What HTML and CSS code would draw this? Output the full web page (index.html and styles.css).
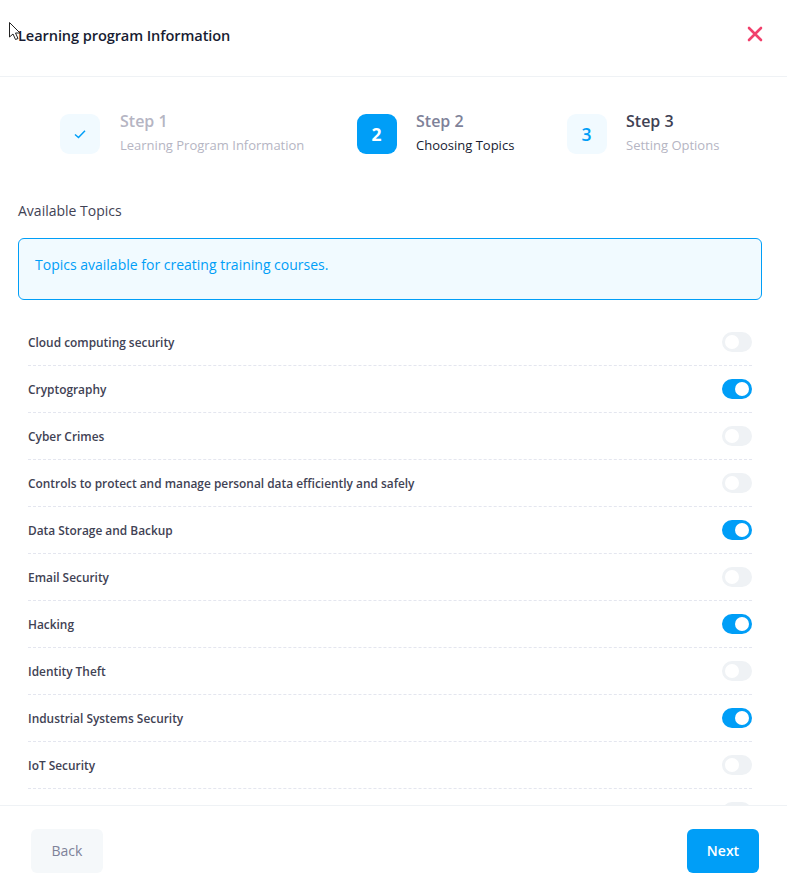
FILE: index.html
```html
<!DOCTYPE html>
<html lang="en">
<head>
<meta charset="utf-8">
<title>Learning program Information</title>
<link rel="stylesheet" href="styles.css">
</head>
<body>
<div class="modal">
  <header class="head">
    <h1 class="title">Learning program Information</h1>
    <svg class="close" width="16" height="16" viewBox="0 0 16 16"><path d="M2 2 L14 14 M14 2 L2 14" stroke="#f1416c" stroke-width="2.6" stroke-linecap="round" fill="none"/></svg>
  </header>
  <main class="body">
    <nav class="steps">
      <div class="step s1">
        <div class="badge"><svg width="14" height="14" viewBox="0 0 14 14"><path d="M2 7.5 L5.5 10.5 L12 3.8" stroke="#009ef7" stroke-width="1.5" fill="none"/></svg></div>
        <div class="step-text"><div class="step-name done">Step 1</div><div class="step-desc">Learning Program Information</div></div>
      </div>
      <div class="step s2">
        <div class="badge active">2</div>
        <div class="step-text"><div class="step-name mid">Step 2</div><div class="step-desc dark">Choosing Topics</div></div>
      </div>
      <div class="step s3">
        <div class="badge">3</div>
        <div class="step-text"><div class="step-name">Step 3</div><div class="step-desc">Setting Options</div></div>
      </div>
    </nav>
    <div class="label">Available Topics</div>
    <div class="notice">Topics available for creating training courses.</div>
    <ul class="topics">
      <li class="topic"><span>Cloud computing security</span><i class="toggle"></i></li>
      <li class="topic"><span>Cryptography</span><i class="toggle on"></i></li>
      <li class="topic"><span>Cyber Crimes</span><i class="toggle"></i></li>
      <li class="topic"><span>Controls to protect and manage personal data efficiently and safely</span><i class="toggle"></i></li>
      <li class="topic"><span>Data Storage and Backup</span><i class="toggle on"></i></li>
      <li class="topic"><span>Email Security</span><i class="toggle"></i></li>
      <li class="topic"><span>Hacking</span><i class="toggle on"></i></li>
      <li class="topic"><span>Identity Theft</span><i class="toggle"></i></li>
      <li class="topic"><span>Industrial Systems Security</span><i class="toggle on"></i></li>
      <li class="topic"><span>IoT Security</span><i class="toggle"></i></li>
      <li class="topic"><span></span><i class="toggle"></i></li>
    </ul>
  </main>
  <footer class="foot">
    <button class="btn back">Back</button>
    <button class="btn next">Next</button>
  </footer>
</div>
<svg class="cursor" width="14" height="20" viewBox="0 0 14 20"><path d="M0.5 0.5 V15 L4 12 L6.5 17.5 L9 16.5 L6.5 11 H11 Z" fill="#fff" stroke="#222" stroke-width="1"/></svg>
</body>
</html>
```
FILE: styles.css
```css
* { box-sizing: border-box; }
html, body { margin: 0; height: 100%; background: #fff; }
body { font-family: "Open Sans", "Noto Sans", sans-serif; color: #181c32; overflow: hidden; }
.modal { height: 892px; display: flex; flex-direction: column; position: relative; }
.head { height: 77px; flex: none; display: flex; align-items: center; justify-content: space-between; padding: 0 24px 6px 18px; border-bottom: 1px solid #eff2f5; }
.title { margin: 0; font-size: 14.6px; font-weight: 600; letter-spacing: -0.1px; color: #181c32; }
.close { display: block; margin-top: -3px; }
.body { flex: 1; min-height: 0; overflow: hidden; padding: 37px 25px 0 18px; }
.steps { display: flex; height: 40px; padding-left: 42px; }
.step { display: flex; }
.s1 { width: 297px; }
.s2 { width: 210px; }
.badge { width: 40px; height: 40px; border-radius: 9px; background: #f1faff; color: #009ef7; font-size: 17.5px; font-weight: 600; display: flex; align-items: center; justify-content: center; padding-right: 1px; }
.badge.active { background: #009ef7; color: #fff; font-weight: 700; }
.step-text { margin-left: 20px; margin-top: -4px; }
.s2 .step-text, .s3 .step-text { margin-left: 19px; }
.step-name { font-size: 16px; font-weight: 600; line-height: 22px; color: #3f4254; white-space: nowrap; }
.step-name.done { color: #b5b5c3; }
.step-name.mid { color: #7e8299; }
.step-desc { font-size: 13px; line-height: 18px; margin-top: 4px; color: #b5b5c3; white-space: nowrap; }
.step-desc.dark { color: #181c32; }
.label { margin-top: 47px; font-size: 14px; line-height: 20px; color: #3f4254; }
.notice { margin-top: 17px; height: 62px; padding: 16px 16px 0; border: 1px solid #009ef7; border-radius: 6px; background: #f1faff; color: #009ef7; font-size: 14px; line-height: 20px; }
.topics { list-style: none; margin: 19px 10px 0; padding: 0; }
.topic { height: 47px; padding-top: 13px; display: flex; justify-content: space-between; border-bottom: 1px dashed #e4e6ef; font-size: 11.9px; font-weight: 600; color: #3f4254; }
.topic span { line-height: 20px; }
.toggle { display: block; position: relative; width: 30px; height: 20px; border-radius: 10px; background: #eff2f5; flex: none; }
.toggle::after { content: ""; position: absolute; top: 3px; left: 3px; width: 14px; height: 14px; border-radius: 50%; background: #fff; }
.toggle.on { background: #009ef7; }
.toggle.on::after { left: 13px; }
.foot { height: 87px; flex: none; display: flex; justify-content: space-between; padding: 23px 28px 0 31px; border-top: 1px solid #eff2f5; }
.btn { width: 72px; height: 44px; padding: 0 0 2px; border: 0; border-radius: 6px; font-family: inherit; font-size: 14px; }
.back { background: #f5f8fa; color: #7e8299; }
.next { background: #009ef7; color: #fff; font-weight: 600; }
.cursor { position: absolute; left: 9px; top: 22px; }
```
